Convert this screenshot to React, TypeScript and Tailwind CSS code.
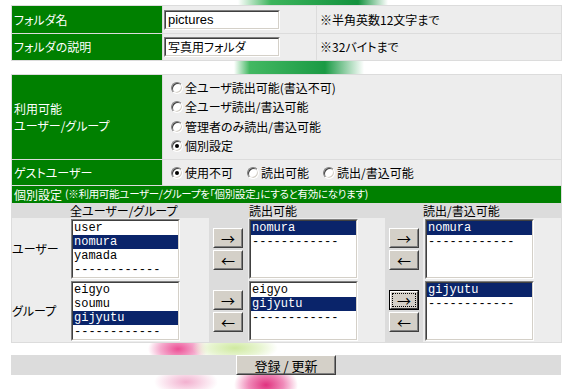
import React from 'react';

const cell = 'bg-[#ededed]';
const green = 'bg-[#008000] text-white';

function Sunken({ w, h, children }: { w: string; h: string; children?: React.ReactNode }) {
  return (
    <div className={`${w} ${h} border border-t-[#808080] border-l-[#808080] border-r-white border-b-white`}>
      <div className="h-full bg-white border border-t-[#404040] border-l-[#404040] border-r-[#d4d0c8] border-b-[#d4d0c8] overflow-hidden">
        {children}
      </div>
    </div>
  );
}

function Radio({ on }: { on?: boolean }) {
  return (
    <span className="relative inline-block w-[12px] h-[12px] shrink-0 rounded-full bg-white border border-t-[#808080] border-l-[#808080] border-r-white border-b-white shadow-[inset_1px_1px_0_#404040,inset_-1px_-1px_0_#d4d0c8]">
      {on && <span className="absolute left-[3px] top-[3px] w-[4px] h-[4px] rounded-full bg-black" />}
    </span>
  );
}

function Option({ label, on }: { label: string; on?: boolean }) {
  return (
    <div className="flex items-center gap-[2px] h-[19.5px]">
      <Radio on={on} />
      <span>{label}</span>
    </div>
  );
}

function ArrowBtn({ ch, focus }: { ch: string; focus?: boolean }) {
  if (focus) {
    return (
      <div className="w-[30px] h-[20px] border border-black bg-[#d4d0c8]">
        <div className="h-full border border-t-white border-l-white border-r-[#404040] border-b-[#404040] p-[1px]">
          <div className="h-full border border-dotted border-black flex items-center justify-center text-[14px]">{ch}</div>
        </div>
      </div>
    );
  }
  return (
    <div className="w-[30px] h-[20px] bg-[#d4d0c8] border border-t-white border-l-white border-r-[#404040] border-b-[#404040]">
      <div className="h-full border border-t-[#d4d0c8] border-l-[#d4d0c8] border-r-[#808080] border-b-[#808080] flex items-center justify-center text-[14px]">
        {ch}
      </div>
    </div>
  );
}

function ListBox({ items, selected }: { items: string[]; selected?: string }) {
  return (
    <Sunken w="w-[109px]" h="h-[60px]">
      <div className="font-['Liberation_Mono',monospace] text-[12px] [font-feature-settings:normal]">
        {items.map((it) => (
          <div
            key={it}
            className={`h-[14px] leading-[14px] pl-[1px] whitespace-pre ${it === selected ? 'bg-[#0a246a] text-white' : ''}`}
          >
            {it}
          </div>
        ))}
      </div>
    </Sunken>
  );
}

function Buttons({ focus }: { focus?: boolean }) {
  return (
    <div className="flex flex-col gap-[2px]">
      <ArrowBtn ch="→" focus={focus} />
      <ArrowBtn ch="←" />
    </div>
  );
}

const dash = '------------';

export default function App() {
  return (
    <div className="relative w-[571px] h-[389px] overflow-hidden bg-white font-['Noto_Sans_CJK_JP',sans-serif] text-[12px] leading-none text-black [font-feature-settings:'palt']">
      {/* background decoration */}
      <div className="absolute left-[238px] top-[-6px] w-[150px] h-[14px] bg-[linear-gradient(90deg,transparent,#3cb45c_22%,#13923e_80%,transparent)]" />
      <div className="absolute left-[234px] top-[58px] w-[130px] h-[20px] bg-[linear-gradient(90deg,transparent,#43b862_12%,#1a9a44_70%,transparent)]" />
      <div className="absolute left-[148px] top-[332px] w-[60px] h-[34px] rounded-full bg-[radial-gradient(closest-side,#ec4f95,#f5acce_60%,transparent)]" />
      <div className="absolute left-[192px] top-[334px] w-[86px] h-[28px] rounded-full bg-[radial-gradient(closest-side,#cfe9a0,#e8f5d2_60%,transparent)]" />
      <div className="absolute left-[154px] top-[368px] w-[64px] h-[28px] rounded-full bg-[radial-gradient(closest-side,#f2b0cf,transparent)]" />
      <div className="absolute left-[234px] top-[364px] w-[64px] h-[42px] rounded-full bg-[radial-gradient(closest-side,#e0327f,#f08cba_55%,transparent)]" />

      <div className="relative pt-[5px] pl-[11px]">
        {/* folder */}
        <div className="grid grid-cols-[150px_153px_244px] grid-rows-[27px_26px] gap-px p-px bg-[#dcdcdc] w-[551px]">
          <div className={`${green} flex items-center pl-[2px]`}>フォルダ名</div>
          <div className={`${cell} flex items-center pl-[1px]`}>
            <Sunken w="w-[116px]" h="h-[20px]">
              <div className="pl-[2px] leading-[16px] font-['Liberation_Sans','Noto_Sans_CJK_JP',sans-serif] text-[13px]">pictures</div>
            </Sunken>
          </div>
          <div className={`${cell} flex items-center pl-[3px]`}>※半角英数12文字まで</div>
          <div className={`${green} flex items-center pl-[2px]`}>フォルダの説明</div>
          <div className={`${cell} flex items-center pl-[1px]`}>
            <Sunken w="w-[116px]" h="h-[20px]">
              <div className="pl-[2px] leading-[16px] text-[12px]">写真用フォルダ</div>
            </Sunken>
          </div>
          <div className={`${cell} flex items-center pl-[3px]`}>※32バイトまで</div>
        </div>

        {/* access */}
        <div className="mt-[13px] grid grid-cols-[150px_398px] gap-px p-px bg-[#dcdcdc] w-[551px]">
          <div className={`${green} flex flex-col justify-center pl-[2px] leading-[17.5px] h-[84px]`}>
            <span>利用可能</span>
            <span>ユーザー/グループ</span>
          </div>
          <div className={`${cell} flex flex-col py-[3px] pl-[8px]`}>
            <Option label="全ユーザ読出可能(書込不可)" />
            <Option label="全ユーザ読出/書込可能" />
            <Option label="管理者のみ読出/書込可能" />
            <Option label="個別設定" on />
          </div>

          <div className={`${green} flex items-center pl-[2px] h-[25px]`}>ゲストユーザー</div>
          <div className={`${cell} flex items-center gap-[14px] pl-[8px]`}>
            <Option label="使用不可" on />
            <Option label="読出可能" />
            <Option label="読出/書込可能" />
          </div>

          <div className={`${green} col-span-2 h-[17px] flex items-center pl-[2px]`}>
            <span>個別設定</span>
            <span className="ml-[3px] text-[10.5px] tracking-[-0.3px]">(※利用可能ユーザー/グループを「個別設定」にすると有効になります)</span>
          </div>

          <div className="col-span-2 grid grid-cols-[58px_139px_39px_137px_38px_138px] grid-rows-[14px_62px_62px]">
            <div className="bg-[#dcdcdc]" />
            <div className="bg-[#dcdcdc] leading-[14px]">全ユーザー/グループ</div>
            <div className="bg-[#dcdcdc]" />
            <div className="bg-[#dcdcdc] leading-[14px] pl-[1px]">読出可能</div>
            <div className="bg-[#dcdcdc]" />
            <div className="bg-[#dcdcdc] leading-[14px]">読出/書込可能</div>

            <div className={`${cell} flex items-center`}>ユーザー</div>
            <div className={`${cell} flex items-center pl-[1px]`}>
              <ListBox items={['user', 'nomura', 'yamada', dash]} selected="nomura" />
            </div>
            <div className="bg-[#dcdcdc] flex items-center pl-[4px]">
              <Buttons />
            </div>
            <div className={`${cell} flex items-center pl-[1px]`}>
              <ListBox items={['nomura', dash]} selected="nomura" />
            </div>
            <div className="bg-[#dcdcdc] flex items-center pl-[4px]">
              <Buttons />
            </div>
            <div className={`${cell} flex items-center pl-[2px]`}>
              <ListBox items={['nomura', dash]} selected="nomura" />
            </div>

            <div className={`${cell} flex items-center`}>グループ</div>
            <div className={`${cell} flex items-center pl-[1px]`}>
              <ListBox items={['eigyo', 'soumu', 'gijyutu', dash]} selected="gijyutu" />
            </div>
            <div className="bg-[#dcdcdc] flex items-center pl-[4px]">
              <Buttons />
            </div>
            <div className={`${cell} flex items-center pl-[1px]`}>
              <ListBox items={['eigyo', 'gijyutu', dash]} selected="gijyutu" />
            </div>
            <div className="bg-[#dcdcdc] flex items-center pl-[4px]">
              <Buttons focus />
            </div>
            <div className={`${cell} flex items-center pl-[2px]`}>
              <ListBox items={['gijyutu', dash]} selected="gijyutu" />
            </div>
          </div>
        </div>

        {/* submit */}
        <div className="mt-[12px] w-[550px] h-[20px] bg-[#dcdcdc] flex justify-center">
          <div className="w-[100px] h-[20px] bg-[#d4d0c8] border border-t-white border-l-white border-r-[#404040] border-b-[#404040]">
            <div className="h-full border border-t-[#d4d0c8] border-l-[#d4d0c8] border-r-[#808080] border-b-[#808080] flex items-center justify-center text-[13px]">
              登録 / 更新
            </div>
          </div>
        </div>
      </div>
    </div>
  );
}
